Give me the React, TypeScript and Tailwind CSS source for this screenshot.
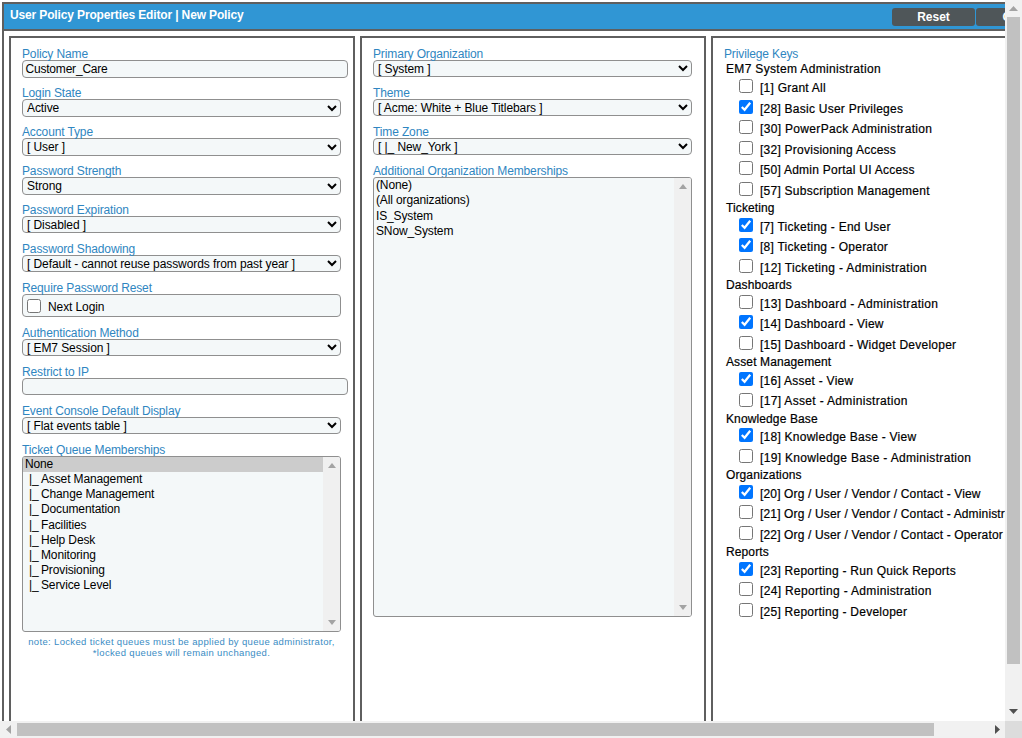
import React from "react";

function Label({ children }: { children: React.ReactNode }) {
  return <div className="h-[13px] text-[12px] leading-[14px] tracking-[-0.13px] text-[#2f86c1] whitespace-nowrap">{children}</div>;
}

function Field({ label, value, tall }: { label: string; value: string; tall?: boolean }) {
  return (
    <div className="h-[39px]">
      <Label>{label}</Label>
      <select
        defaultValue={value}
        className={`block ${tall ? "h-[18px]" : "h-[17px]"} w-full rounded-[4px] border border-[#8f8f8f] bg-[#f4f8f9] [font-family:Liberation_Sans,Arial,sans-serif] text-[12px] leading-[14px] tracking-[-0.08px] text-black`}
      >
        <option>{value}</option>
      </select>
    </div>
  );
}

function TextField({ label, value, tall }: { label: string; value: string; tall?: boolean }) {
  return (
    <div className="h-[39px]">
      <Label>{label}</Label>
      <div className={`flex ${tall ? "h-[18px]" : "h-[17px]"} w-[326px] items-center rounded-[4px] border border-[#8f8f8f] bg-[#f4f8f9] pl-[2.5px] text-[12px] tracking-[-0.2px] text-black`}>
        {value}
      </div>
    </div>
  );
}

function ListBox({ height, children }: { height: string; children: React.ReactNode }) {
  return (
    <div className={`relative ${height} overflow-hidden rounded-[3px] border border-[#8f8f8f] bg-[#f4f8f9] text-[12px] leading-[15.3px] tracking-[-0.13px] text-black`}>
      {children}
      <div className="absolute right-0 top-0 bottom-0 flex w-[17px] flex-col items-center justify-between bg-[#f0f0f0] py-[6px]">
        <svg width="8" height="5" viewBox="0 0 8 5"><path d="M4 0 L8 5 L0 5 Z" fill="#a3a3a3" /></svg>
        <svg width="8" height="5" viewBox="0 0 8 5"><path d="M0 0 L8 0 L4 5 Z" fill="#a3a3a3" /></svg>
      </div>
    </div>
  );
}

type Row = { t: string; c?: boolean };
const groups: { h: string; rows: Row[] }[] = [
  {
    h: "EM7 System Administration",
    rows: [
      { t: "[1] Grant All" },
      { t: "[28] Basic User Privileges", c: true },
      { t: "[30] PowerPack Administration" },
      { t: "[32] Provisioning Access" },
      { t: "[50] Admin Portal UI Access" },
      { t: "[57] Subscription Management" },
    ],
  },
  {
    h: "Ticketing",
    rows: [
      { t: "[7] Ticketing - End User", c: true },
      { t: "[8] Ticketing - Operator", c: true },
      { t: "[12] Ticketing - Administration" },
    ],
  },
  {
    h: "Dashboards",
    rows: [
      { t: "[13] Dashboard - Administration" },
      { t: "[14] Dashboard - View", c: true },
      { t: "[15] Dashboard - Widget Developer" },
    ],
  },
  {
    h: "Asset Management",
    rows: [{ t: "[16] Asset - View", c: true }, { t: "[17] Asset - Administration" }],
  },
  {
    h: "Knowledge Base",
    rows: [{ t: "[18] Knowledge Base - View", c: true }, { t: "[19] Knowledge Base - Administration" }],
  },
  {
    h: "Organizations",
    rows: [
      { t: "[20] Org / User / Vendor / Contact - View", c: true },
      { t: "[21] Org / User / Vendor / Contact - Administrator" },
      { t: "[22] Org / User / Vendor / Contact - Operator" },
    ],
  },
  {
    h: "Reports",
    rows: [
      { t: "[23] Reporting - Run Quick Reports", c: true },
      { t: "[24] Reporting - Administration" },
      { t: "[25] Reporting - Developer" },
    ],
  },
];

const queues = ["Asset Management", "Change Management", "Documentation", "Facilities", "Help Desk", "Monitoring", "Provisioning", "Service Level"];

function rowTracking(t: string) {
  if (t.includes("Org /")) return "tracking-[0.15px]";
  if (t.includes("Administration")) return "tracking-[0.33px]";
  return "tracking-[0.25px]";
}

export default function App() {
  return (
    <div className="relative h-[738px] w-[1022px] overflow-hidden bg-white [font-family:Liberation_Sans,Arial,sans-serif]">
      {/* outer frame */}
      <div className="absolute left-[2px] top-[2px] h-[760px] w-[1060px] border-2 border-[#5f5f5f]" />
      {/* title bar */}
      <div className="absolute left-[4px] top-[4px] flex h-[27px] w-[1003px] border-b-2 border-[#5f5f5f] bg-[#3096d4]">
        <span className="pl-[6px] pt-[3px] text-[12px] font-bold leading-[16px] tracking-[-0.14px] text-white">User Policy Properties Editor | New Policy</span>
        <div className="absolute left-[888px] top-[4px] flex h-[18px] w-[83px] items-center justify-center rounded-[3px] bg-[#4f5659] text-[12px] font-bold text-white">Reset</div>
        <div className="absolute left-[972px] top-[4px] flex h-[18px] w-[83px] items-center justify-center rounded-[3px] bg-[#4f5659] text-[12px] font-bold text-white">Clear</div>
      </div>

      {/* left panel */}
      <div className="absolute left-[9px] top-[36px] h-[720px] w-[346px] border-2 border-[#5f5f5f] pl-[11px] pr-[12px] pt-[9px]">
        <TextField label="Policy Name" value="Customer_Care" tall />
        <Field label="Login State" value="Active" tall />
        <Field label="Account Type" value="[ User ]" tall />
        <Field label="Password Strength" value="Strong" tall />
        <Field label="Password Expiration" value="[ Disabled ]" />
        <Field label="Password Shadowing" value="[ Default - cannot reuse passwords from past year ]" />
        <div className="h-[45px]">
          <Label>Require Password Reset</Label>
          <div className="flex h-[23px] items-center rounded-[4px] border border-[#8f8f8f] bg-[#f4f8f9] pl-[4px] text-[12px] tracking-[-0.1px] text-black">
            <input type="checkbox" className="m-0 h-[14px] w-[14px]" />
            <span className="pl-[7px] pt-[3px]">Next Login</span>
          </div>
        </div>
        <Field label="Authentication Method" value="[ EM7 Session ]" />
        <TextField label="Restrict to IP" value="" />
        <Field label="Event Console Default Display" value="[ Flat events table ]" />
        <Label>Ticket Queue Memberships</Label>
        <ListBox height="h-[176px]">
          <div className="mr-[17px] h-[15.3px] bg-[#cccccc] pl-[2px]">None</div>
          {queues.map((q) => (
            <div key={q} className="flex h-[15.1px] pl-[6px]">
              <span className="w-[12px]">|_</span>
              <span>{q}</span>
            </div>
          ))}
        </ListBox>
        <div className="pt-[4px] text-center text-[9.5px] leading-[11px] tracking-[0.34px] text-[#3a8cc4]">
          <div className="whitespace-nowrap">note: Locked ticket queues must be applied by queue administrator,</div>
          <div>*locked queues will remain unchanged.</div>
        </div>
      </div>

      {/* middle panel */}
      <div className="absolute left-[360px] top-[36px] h-[720px] w-[346px] border-2 border-[#5f5f5f] pl-[11px] pr-[12px] pt-[9px]">
        <Field label="Primary Organization" value="[ System ]" />
        <Field label="Theme" value="[ Acme: White + Blue Titlebars ]" />
        <Field label="Time Zone" value="[ |_ New_York ]" />
        <Label>Additional Organization Memberships</Label>
        <ListBox height="h-[440px]">
          <div className="pl-[2px]">
            <div>(None)</div>
            <div>(All organizations)</div>
            <div>IS_System</div>
            <div>SNow_System</div>
          </div>
        </ListBox>
      </div>

      {/* right panel */}
      <div className="absolute left-[711px] top-[36px] h-[720px] w-[500px] border-2 border-[#5f5f5f] pl-[11px] pt-[9px]">
        <Label>Privilege Keys</Label>
        <div className="pl-[2px] pt-[2.2px] [-webkit-text-stroke:0.2px_#000]">
          {groups.map((g) => (
            <div key={g.h}>
              <div className={`h-[15.25px] whitespace-nowrap text-[12px] leading-[14px] text-black ${g.h.startsWith("EM7") ? "tracking-[0.33px]" : "tracking-[0.12px]"}`}>{g.h}</div>
              {g.rows.map((r) => (
                <div key={r.t} className={`flex h-[20.6px] items-start whitespace-nowrap pl-[13px] text-[12px] leading-[20px] text-black ${rowTracking(r.t)}`}>
                  <input type="checkbox" defaultChecked={r.c} className="m-0 mt-[1.6px] h-[14px] w-[14px] shrink-0" />
                  <span className="pl-[7px] pt-[0.5px]">{r.t}</span>
                </div>
              ))}
            </div>
          ))}
        </div>
      </div>

      {/* vertical scrollbar */}
      <div className="absolute right-0 top-0 h-[738px] w-[17px] bg-[#f1f1f1]">
        <svg className="absolute left-[4px] top-[6px]" width="9" height="5" viewBox="0 0 9 5"><path d="M4.5 0 L9 5 L0 5 Z" fill="#a3a3a3" /></svg>
        <div className="absolute left-[2px] top-[17px] h-[647px] w-[13px] bg-[#c1c1c1]" />
        <svg className="absolute left-[4px] top-[709px]" width="9" height="5" viewBox="0 0 9 5"><path d="M0 0 L9 0 L4.5 5 Z" fill="#505050" /></svg>
      </div>
      {/* horizontal scrollbar */}
      <div className="absolute bottom-0 left-0 h-[17px] w-[1022px] bg-[#f1f1f1]">
        <svg className="absolute left-[6px] top-[4px]" width="5" height="9" viewBox="0 0 5 9"><path d="M5 0 L5 9 L0 4.5 Z" fill="#a3a3a3" /></svg>
        <div className="absolute left-[17px] top-[2px] h-[13px] w-[917px] bg-[#c1c1c1]" />
        <svg className="absolute left-[995px] top-[4px]" width="5" height="9" viewBox="0 0 5 9"><path d="M0 0 L0 9 L5 4.5 Z" fill="#505050" /></svg>
        <div className="absolute left-[1005px] top-0 h-[17px] w-[17px] bg-[#dcdcdc]" />
      </div>
    </div>
  );
}
